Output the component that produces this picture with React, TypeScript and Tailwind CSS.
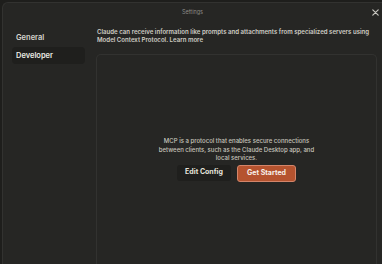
import React from "react";

export default function App() {
  return (
    <div className="w-[382px] h-[264px] bg-[#1e1e1c] overflow-hidden" style={{ fontFamily: "Inter, 'Noto Sans', sans-serif" }}>
      <div className="ml-[2px] mt-[2px] w-[380px] h-[262px] bg-[#262624] rounded-tl-[6px] border-l border-t border-[#323230] flex flex-col relative">
        <div className="h-[17px] flex items-center justify-center text-[5.5px] text-[#8d8c86] pt-[2px]">Settings</div>
        <button className="absolute right-[2px] top-[5px] text-[#c8c7c0]">
          <svg width="9" height="9" viewBox="0 0 10 10" fill="none" stroke="currentColor" strokeWidth="1.3" strokeLinecap="round">
            <path d="M2 2L8 8M8 2L2 8" />
          </svg>
        </button>
        <div className="flex flex-1 min-h-0">
          <div className="w-[93px] pl-[9px] pr-[11px] pt-[9px] flex flex-col gap-[1px]">
            <div className="h-[17px] flex items-center px-[4px] text-[7.5px] font-semibold text-[#d8d6ce]">General</div>
            <div className="h-[17px] flex items-center px-[4px] text-[7.5px] font-semibold text-[#ecebe5] bg-[#1f1f1d] rounded-[4px]">Developer</div>
          </div>
          <div className="flex-1 flex flex-col pt-[8px] pr-[5px]">
            <p className="text-[6.1px] leading-[8px] font-semibold text-[#cfcdc5] ml-[1px]">
              Claude can receive information like prompts and attachments from specialized servers using Model Context Protocol. Learn more
            </p>
            <div className="mt-[10px] flex-1 border-t border-l border-r border-[#323230] rounded-t-[5px] flex flex-col items-center pt-[82px]">
              <p className="text-[6px] leading-[8.5px] font-medium text-[#c7c5bd] text-center w-[160px]">
                MCP is a protocol that enables secure connections between clients, such as the Claude Desktop app, and local services.
              </p>
              <div className="mt-[2px] flex gap-[6px]">
                <button className="w-[54px] h-[16px] rounded-[3px] bg-[#1f1f1d] text-[7px] font-bold text-[#e6e4dc]">Edit Config</button>
                <button className="w-[59px] h-[17px] rounded-[3px] bg-[#b5532f] border border-[#d3856a] text-[7px] font-bold text-[#f7efe9]">Get Started</button>
              </div>
            </div>
          </div>
        </div>
      </div>
    </div>
  );
}
